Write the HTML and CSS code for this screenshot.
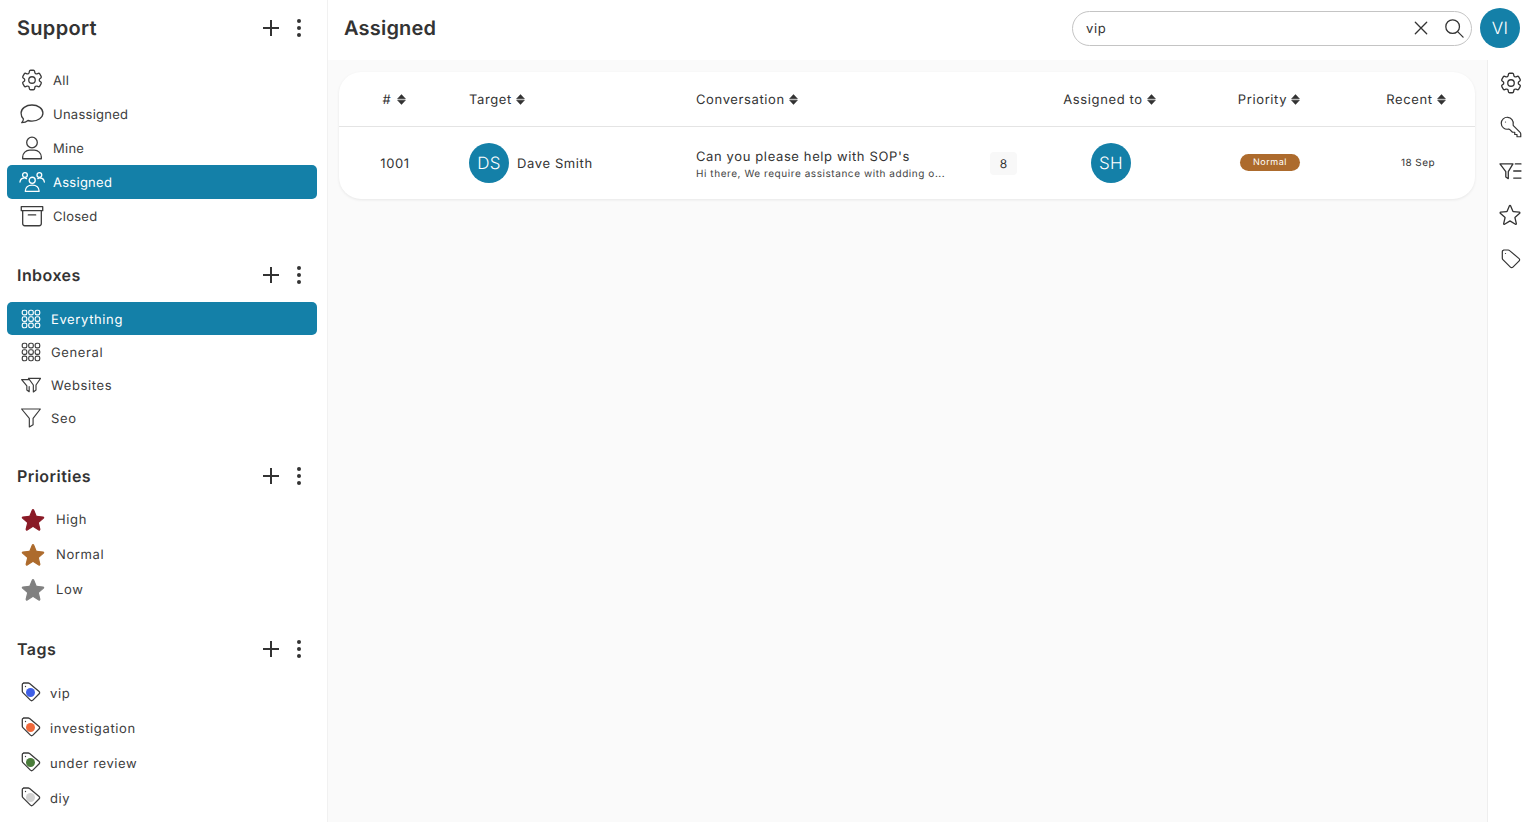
FILE: index.html
```html
<!DOCTYPE html>
<html lang="en">
<head>
<meta charset="utf-8">
<title>Support</title>
<link rel="stylesheet" href="styles.css">
</head>
<body>
<svg class="defs" aria-hidden="true">
  <defs>
    <symbol id="i-cog" viewBox="0 0 24 24"><path d="M9.594 3.94c.09-.542.56-.94 1.11-.94h2.593c.55 0 1.02.398 1.11.94l.213 1.281c.063.374.313.686.645.87.074.04.147.083.22.127.324.196.72.257 1.075.124l1.217-.456a1.125 1.125 0 011.37.49l1.296 2.247a1.125 1.125 0 01-.26 1.431l-1.003.827c-.293.24-.438.613-.431.992a6.759 6.759 0 010 .255c-.007.378.138.75.43.99l1.005.828c.424.35.534.954.26 1.43l-1.298 2.247a1.125 1.125 0 01-1.369.491l-1.217-.456c-.355-.133-.75-.072-1.076.124a6.57 6.57 0 01-.22.128c-.331.183-.581.495-.644.869l-.213 1.28c-.09.543-.56.941-1.11.941h-2.594c-.55 0-1.02-.398-1.11-.94l-.213-1.281c-.062-.374-.312-.686-.644-.87a6.52 6.52 0 01-.22-.127c-.325-.196-.72-.257-1.076-.124l-1.217.456a1.125 1.125 0 01-1.369-.49l-1.297-2.247a1.125 1.125 0 01.26-1.431l1.004-.827c.292-.24.437-.613.43-.992a6.932 6.932 0 010-.255c.007-.378-.138-.75-.43-.99l-1.004-.828a1.125 1.125 0 01-.26-1.43l1.297-2.247a1.125 1.125 0 011.37-.491l1.216.456c.356.133.751.072 1.076-.124.072-.044.146-.087.22-.128.332-.183.582-.495.644-.869l.214-1.281z"/><path d="M15 12a3 3 0 11-6 0 3 3 0 016 0z"/></symbol>
    <symbol id="i-chat" viewBox="0 0 24 24"><path d="M12 3.700c5.600 0 10.100 3.300 10.100 7.400s-4.500 7.400-10.100 7.400c-1.300 0-2.600-.2-3.700-.5-1.300 1.200-3.200 1.900-5.800 2 .9-.9 1.500-2 1.600-3.400C2.700 15.300 1.900 13.300 1.900 11.100 1.900 7 6.400 3.700 12 3.700z"/></symbol>
    <symbol id="i-user" viewBox="0 0 24 24"><circle cx="12" cy="6.900" r="4.900"/><path d="M3.400 21.900v-1.500c0-3.600 3-6.500 6.500-6.500h4.200c3.500 0 6.500 2.900 6.500 6.500v1.500z"/></symbol>
    <symbol id="i-group" viewBox="0 0 24 24"><circle cx="12.200" cy="10.400" r="2.800"/><circle cx="5.500" cy="5.500" r="2.200"/><circle cx="18.800" cy="5.500" r="2.200"/><path d="M5.800 20.600c0-3.500 2.500-5.800 6.400-5.800s6.400 2.300 6.400 5.800z"/><path d="M.9 12c.3-2.100 1.700-3.500 3.600-3.700 1-.1 1.700.1 2.400.6M23.400 12c-.3-2.100-1.700-3.500-3.600-3.700-1-.1-1.700.1-2.400.6"/></symbol>
    <symbol id="i-archive" viewBox="0 0 24 24"><path d="M2.100 3.400h19.800v3.700H2.100zM3.400 7.100V19a2 2 0 002 2h13.200a2 2 0 002-2V7.100M8.600 11h6.800"/></symbol>
    <symbol id="i-grid" viewBox="0 0 24 24"><g><rect x="1.500" y="1.500" width="5.500" height="5.500" rx="2"/><rect x="9.250" y="1.500" width="5.500" height="5.500" rx="2"/><rect x="17" y="1.500" width="5.500" height="5.500" rx="2"/><rect x="1.500" y="9.250" width="5.500" height="5.500" rx="2"/><rect x="9.250" y="9.250" width="5.500" height="5.500" rx="2"/><rect x="17" y="9.250" width="5.500" height="5.500" rx="2"/><rect x="1.500" y="17" width="5.500" height="5.500" rx="2"/><rect x="9.250" y="17" width="5.500" height="5.500" rx="2"/><rect x="17" y="17" width="5.500" height="5.500" rx="2"/></g></symbol>
    <symbol id="i-funnels" viewBox="0 0 24 24"><path d="M.75 5.500h8.500M.75 5.500L7 13v5l2.800 2V14"/><path d="M9 4h14.500L18 12v6l-3.200 2.400V12z"/></symbol>
    <symbol id="i-funnel" viewBox="0 0 24 24"><path d="M.75 1.200h22.500L14.500 12.500V20L10 22.800V12.500z"/></symbol>
    <symbol id="i-star" viewBox="0 0 24 24"><path d="M11.48 3.499a.562.562 0 011.04 0l2.125 5.111a.563.563 0 00.475.345l5.518.442c.499.04.701.663.321.988l-4.204 3.602a.563.563 0 00-.182.557l1.285 5.385a.562.562 0 01-.84.61l-4.725-2.885a.562.562 0 00-.586 0L6.982 20.54a.562.562 0 01-.84-.61l1.285-5.386a.562.562 0 00-.182-.557l-4.204-3.602a.563.563 0 01.321-.988l5.518-.442a.563.563 0 00.475-.345L11.48 3.5z"/></symbol>
    <symbol id="i-tag" viewBox="0 0 24 24"><path d="M4.500 3h4.700a2 2 0 011.400.6l9.500 8a1.500 1.500 0 01.100 2.200l-6.300 6.300a1.800 1.800 0 01-2.500 0l-7.500-7.500a2 2 0 01-.6-1.400V4.800a1.800 1.800 0 011.800-1.800z"/><path d="M6.500 6.500h.01"/></symbol>
    <symbol id="i-key" viewBox="0 0 24 24"><path d="M2.250 8.250a6 6 0 007.029 5.912c.563-.097 1.159.026 1.563.430l2.658 2.658h2.250v2.250H18v2.250h3.750v-2.818c0-.597-.237-1.170-.659-1.591l-6.499-6.499c-.404-.404-.527-1-.430-1.563A6 6 0 102.250 8.250z"/><path d="M6.500 7h.008v.008H6.500z"/></symbol>
    <symbol id="i-filterlist" viewBox="0 0 24 24"><path d="M1.800 5.500h12L9.500 12.500V19l-2.300-1.500v-5z"/><path d="M16 5.500h5.200M14.500 12h6.700M14.500 18.500h6.700"/></symbol>
    <symbol id="i-plus" viewBox="0 0 18 18"><path d="M9 1v16M1 9h16"/></symbol>
    <symbol id="i-sort" viewBox="0 0 9 11"><path d="M4.500.6 8.400 4.800H.6zM4.500 10.400.6 6.200H8.400z"/></symbol>
  </defs>
</svg>

<div class="app">
  <aside class="sidebar">
    <section class="section">
      <div class="section-head section-head-main">
        <h1 class="section-title section-title-main">Support</h1>
        <div class="section-actions">
          <svg class="plus"><use href="#i-plus"/></svg>
          <span class="dots"><i></i><i></i><i></i></span>
        </div>
      </div>
      <ul class="list list-main">
        <li class="row"><svg class="ico"><use href="#i-cog"/></svg>All</li>
        <li class="row"><svg class="ico"><use href="#i-chat"/></svg>Unassigned</li>
        <li class="row"><svg class="ico"><use href="#i-user"/></svg>Mine</li>
        <li class="row is-active"><svg class="ico"><use href="#i-group"/></svg>Assigned</li>
        <li class="row"><svg class="ico"><use href="#i-archive"/></svg>Closed</li>
      </ul>
    </section>

    <section class="section">
      <div class="section-head">
        <h2 class="section-title">Inboxes</h2>
        <div class="section-actions">
          <svg class="plus"><use href="#i-plus"/></svg>
          <span class="dots"><i></i><i></i><i></i></span>
        </div>
      </div>
      <ul class="list list-inbox">
        <li class="row is-active"><svg class="ico"><use href="#i-grid"/></svg>Everything</li>
        <li class="row"><svg class="ico"><use href="#i-grid"/></svg>General</li>
        <li class="row"><svg class="ico"><use href="#i-funnels"/></svg>Websites</li>
        <li class="row"><svg class="ico"><use href="#i-funnel"/></svg>Seo</li>
      </ul>
    </section>

    <section class="section">
      <div class="section-head">
        <h2 class="section-title">Priorities</h2>
        <div class="section-actions">
          <svg class="plus"><use href="#i-plus"/></svg>
          <span class="dots"><i></i><i></i><i></i></span>
        </div>
      </div>
      <ul class="list list-priority">
        <li class="row"><svg class="ico star-high"><use href="#i-star"/></svg>High</li>
        <li class="row"><svg class="ico star-normal"><use href="#i-star"/></svg>Normal</li>
        <li class="row"><svg class="ico star-low"><use href="#i-star"/></svg>Low</li>
      </ul>
    </section>

    <section class="section">
      <div class="section-head">
        <h2 class="section-title">Tags</h2>
        <div class="section-actions">
          <svg class="plus"><use href="#i-plus"/></svg>
          <span class="dots"><i></i><i></i><i></i></span>
        </div>
      </div>
      <ul class="list list-tags">
        <li class="row"><span class="tagmark tag-blue"><svg class="ico"><use href="#i-tag"/></svg></span>vip</li>
        <li class="row"><span class="tagmark tag-orange"><svg class="ico"><use href="#i-tag"/></svg></span>investigation</li>
        <li class="row"><span class="tagmark tag-green"><svg class="ico"><use href="#i-tag"/></svg></span>under review</li>
        <li class="row"><span class="tagmark tag-grey"><svg class="ico"><use href="#i-tag"/></svg></span>diy</li>
      </ul>
    </section>
  </aside>

  <div class="main">
    <header class="topbar">
      <h1 class="page-title">Assigned</h1>
      <div class="search">
        <span class="search-value">vip</span>
        <svg class="search-x" viewBox="0 0 16 16"><path d="M1.500 1.500l13 13M14.500 1.500l-13 13"/></svg>
        <svg class="search-glass" viewBox="0 0 22 22"><circle cx="9.500" cy="9.500" r="7.500"/><path d="M15 15l6 6"/></svg>
      </div>
      <span class="avatar">VI</span>
    </header>

    <div class="workspace">
      <div class="content">
        <div class="card">
          <div class="grid grid-head">
            <div class="cell cell-center cell-id">#<svg class="sort sort-id"><use href="#i-sort"/></svg></div>
            <div class="cell cell-target">Target<svg class="sort"><use href="#i-sort"/></svg></div>
            <div class="cell">Conversation<svg class="sort"><use href="#i-sort"/></svg></div>
            <div class="cell cell-center cell-shift">Assigned to<svg class="sort"><use href="#i-sort"/></svg></div>
            <div class="cell cell-center cell-priority">Priority<svg class="sort"><use href="#i-sort"/></svg></div>
            <div class="cell cell-center cell-recent">Recent<svg class="sort"><use href="#i-sort"/></svg></div>
          </div>
          <div class="grid grid-row">
            <div class="cell cell-center">1001</div>
            <div class="cell cell-target"><span class="avatar">DS</span><span class="target-name">Dave Smith</span></div>
            <div class="cell">
              <div class="conv">
                <div class="conv-title">Can you please help with SOP's</div>
                <div class="conv-sub">Hi there, We require assistance with adding o...</div>
              </div>
              <span class="count">8</span>
            </div>
            <div class="cell cell-center"><span class="avatar">SH</span></div>
            <div class="cell cell-center"><span class="badge">Normal</span></div>
            <div class="cell cell-center cell-date">18 Sep</div>
          </div>
        </div>
      </div>
      <nav class="rail">
        <svg class="rail-ico"><use href="#i-cog"/></svg>
        <svg class="rail-ico rail-ico-small"><use href="#i-key"/></svg>
        <svg class="rail-ico"><use href="#i-filterlist"/></svg>
        <svg class="rail-ico rail-ico-star"><use href="#i-star"/></svg>
        <svg class="rail-ico rail-ico-small"><use href="#i-tag"/></svg>
      </nav>
    </div>
  </div>
</div>
</body>
</html>
```

FILE: styles.css
```css
* { box-sizing: border-box; }

html, body {
  margin: 0;
  height: 100%;
  overflow: hidden;
}

body {
  font-family: Inter, "Noto Sans", sans-serif;
  font-size: 13px;
  letter-spacing: 0.62px;
  text-rendering: geometricPrecision;
  color: #333;
  background: #fff;
}

.defs { position: absolute; width: 0; height: 0; }

.app {
  display: flex;
  height: 822px;
}

/* Sidebar */
.sidebar {
  width: 328px;
  flex: none;
  padding: 0 10px 0 7px;
  background: #fff;
  border-right: 1px solid #f1f1f1;
  display: flex;
  flex-direction: column;
  gap: 22px;
}

.section-head {
  height: 40px;
  display: flex;
  align-items: center;
  justify-content: space-between;
  padding: 0 16px 0 10px;
}

.section-head-main { margin-top: 8px; }

.section-title {
  margin: 0;
  font-size: 16px;
  letter-spacing: 0.45px;
  font-weight: 600;
  color: #333;
}

.section-title-main {
  font-size: 20px;
  letter-spacing: 0.3px;
}

.section-actions {
  display: flex;
  align-items: center;
  gap: 17px;
}

.plus {
  width: 18px;
  height: 18px;
  fill: none;
  stroke: #333;
  stroke-width: 2;
}

.dots {
  width: 4px;
  display: flex;
  flex-direction: column;
  gap: 3px;
}

.dots i {
  width: 4px;
  height: 4px;
  border-radius: 50%;
  background: #333;
}

.list {
  list-style: none;
  margin: 0;
  padding: 0;
}

.list-main { margin-top: 15px; letter-spacing: 0.26px; }
.list-inbox { margin-top: 7px; }
.list-priority { margin-top: 6px; }
.list-tags { margin-top: 7px; }

.row {
  display: flex;
  align-items: center;
  border-radius: 5px;
  padding-top: 1px;
  color: #3c3c3c;
}

.ico {
  flex: none;
  margin-top: -1px;
  fill: none;
  stroke: currentColor;
  stroke-width: 1.2;
  stroke-linecap: round;
  stroke-linejoin: round;
}

.list-main .row { height: 34px; padding-left: 12px; gap: 8px; }
.list-main .ico { width: 26px; height: 26px; }

.list-inbox .row { height: 33px; padding: 2px 0 0 14px; gap: 10px; }
.list-inbox .ico { width: 20px; height: 20px; margin-top: -2px; stroke-width: 1.4; }

.list-priority .row { height: 35px; padding-left: 12px; gap: 9px; }
.list-priority .ico { width: 28px; height: 28px; stroke-width: 1; }

.list-tags .row { height: 35px; padding-left: 12px; gap: 7px; }
.list-tags .ico { width: 24px; height: 24px; stroke-width: 1.3; margin-top: 0; }

.row.is-active {
  background: #1480a8;
  color: #fff;
}

.star-high { fill: #8a1a26; stroke: #8a1a26; }
.star-normal { fill: #ad6b2d; stroke: #ad6b2d; }
.star-low { fill: #808080; stroke: #808080; }

.tagmark {
  position: relative;
  display: flex;
  flex: none;
  margin-top: -4px;
}

.tagmark::after {
  content: "";
  position: absolute;
  left: 7px;
  top: 7.5px;
  width: 9px;
  height: 9px;
  border-radius: 50%;
  background: var(--dot);
}

.tag-blue { --dot: #3f5fe6; }
.tag-orange { --dot: #f0683a; }
.tag-green { --dot: #4a7c3a; }
.tag-grey { --dot: #d2d2d2; }

/* Main */
.main {
  flex: 1;
  min-width: 0;
  display: flex;
  flex-direction: column;
}

.topbar {
  height: 60px;
  flex: none;
  display: flex;
  align-items: center;
  padding: 0 8px 4px 16px;
  background: #fff;
}

.page-title {
  margin: 0 auto 0 0;
  font-size: 20px;
  letter-spacing: 0.2px;
  font-weight: 600;
  color: #333;
}

.search {
  width: 400px;
  height: 35px;
  margin-right: 8px;
  padding: 1px 7px 0 13px;
  display: flex;
  align-items: center;
  border: 1px solid #c4c4c4;
  border-radius: 18px;
  background: #fff;
}

.search-value { flex: 1; }

.search-x {
  width: 14px;
  height: 14px;
  margin: -1px 16px 0 0;
  fill: none;
  stroke: #333;
  stroke-width: 1.5;
  stroke-linecap: round;
}

.search-glass {
  width: 20px;
  height: 20px;
  margin-top: -1px;
  fill: none;
  stroke: #333;
  stroke-width: 1.4;
  stroke-linecap: round;
}

.avatar {
  width: 40px;
  height: 40px;
  flex: none;
  display: flex;
  align-items: center;
  justify-content: center;
  padding-top: 1px;
  border-radius: 50%;
  background: #1480a8;
  color: #fff;
  font-size: 17px;
  font-weight: 300;
  letter-spacing: 0.3px;
}

.workspace {
  flex: 1;
  min-height: 0;
  display: flex;
  background: #fafafa;
}

.content {
  flex: 1;
  min-width: 0;
  padding: 12px 12px 0 11px;
}

.card {
  background: #fff;
  border-radius: 22px;
  box-shadow: 0 1px 3px rgba(0, 0, 0, 0.08);
}

.grid {
  display: grid;
  grid-template-columns: 112px 245px 350px 130px 188px 108px;
}

.grid-head {
  height: 55px;
  border-bottom: 1px solid #e4e4e4;
}

.grid-row { height: 72px; }

.cell {
  display: flex;
  align-items: center;
  min-width: 0;
  padding-top: 1px;
}

.cell .avatar,
.cell .count { margin-top: -1px; }

.cell-center { justify-content: center; }
.cell-target { padding-left: 18px; }
.cell-id { padding-right: 1px; }
.cell-shift { padding-right: 3px; }
.cell-priority { padding-right: 2px; }
.cell-recent { padding-right: 4px; }

.sort {
  width: 9px;
  height: 11px;
  margin: -1px 0 0 4px;
  fill: #333;
  stroke: #333;
  stroke-width: 0.6;
  stroke-linejoin: round;
}

.sort-id { margin-left: 6px; }

.target-name { margin-left: 8px; }

.conv {
  width: 294px;
  margin-top: 5px;
}

.conv-title { line-height: 17px; }

.conv-sub {
  font-size: 10px;
  letter-spacing: 0.56px;
  line-height: 17px;
  color: #444;
}

.count {
  width: 27px;
  height: 23px;
  display: flex;
  align-items: center;
  justify-content: center;
  border-radius: 4px;
  background: #f8f8f8;
  font-size: 12px;
  letter-spacing: 0;
}

.badge {
  height: 17px;
  padding: 1px 13px 0;
  display: flex;
  align-items: center;
  border-radius: 9px;
  background: #ad6b2d;
  color: #fff;
  font-size: 9px;
  letter-spacing: 0.5px;
  margin-top: -3px;
}

.cell-date {
  font-size: 10px;
  letter-spacing: 0.4px;
  margin-top: -2px;
}

/* Right rail */
.rail {
  width: 41px;
  flex: none;
  padding: 10px 0 0 10px;
  display: flex;
  flex-direction: column;
  gap: 18px;
  align-items: flex-start;
  background: #fff;
  border-left: 1px solid #eee;
}

.rail-ico {
  width: 26px;
  height: 26px;
  fill: none;
  stroke: #333;
  stroke-width: 1.2;
  stroke-linecap: round;
  stroke-linejoin: round;
  flex: none;
}

.rail-ico-small {
  width: 24px;
  height: 24px;
  margin: 1px 0 1px 1px;
}

.rail-ico-star { margin-left: -1px; }
```
